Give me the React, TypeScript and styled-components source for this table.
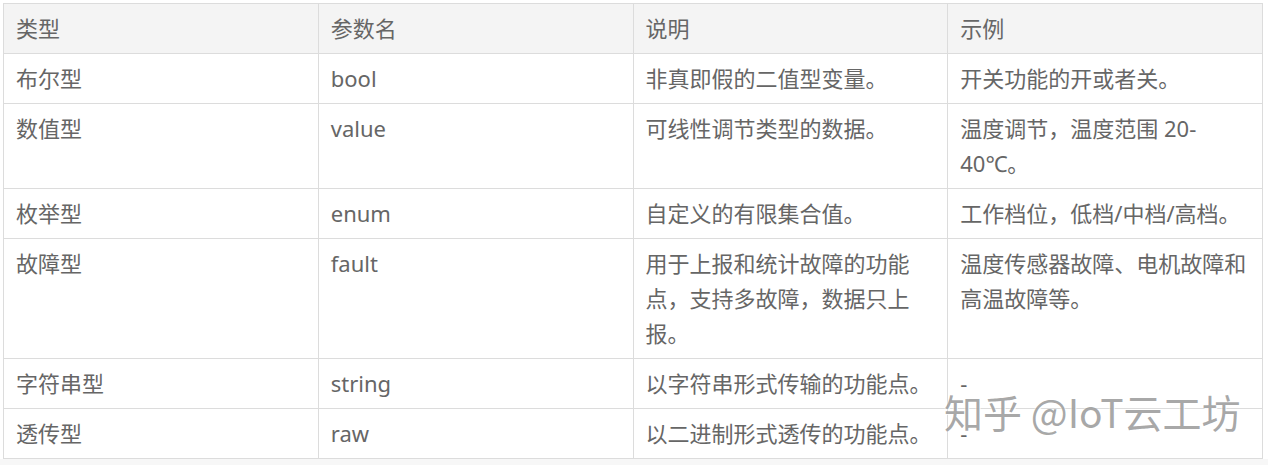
import React from 'react';
import styled, { createGlobalStyle } from 'styled-components';

const GlobalStyle = createGlobalStyle`
	html, body {
		margin: 0;
		padding: 0;
		background: #ffffff;
	}
	body {
		font-family: 'Noto Sans', 'Noto Sans CJK SC', sans-serif;
	}
`;

const Page = styled.div`
	position: relative;
	width: 1268px;
	height: 465px;
	box-sizing: border-box;
	padding: 3px 0 0 3px;
	background: linear-gradient(to bottom, #ffffff 0, #ffffff 459px, #f7f7f7 459px);
`;

const Table = styled.table`
	width: 1260px;
	table-layout: fixed;
	border-collapse: collapse;
	font-family: 'Noto Sans', 'Noto Sans CJK SC', sans-serif;
	font-size: 22px;
	line-height: 35px;
	color: #666666;
	background: #ffffff;
`;

const HeadCell = styled.th`
	padding: 7px 12px;
	border: 1px solid #dcdcdc;
	background: #f4f4f4;
	font-weight: normal;
	text-align: left;
	vertical-align: top;
`;

const Cell = styled.td`
	padding: 7px 12px;
	border: 1px solid #dcdcdc;
	text-align: left;
	vertical-align: top;
`;

const Watermark = styled.div`
	position: absolute;
	left: 944px;
	top: 385px;
	font-family: 'Noto Sans CJK SC', 'Noto Sans', sans-serif;
	font-size: 39px;
	line-height: 52px;
	color: rgba(110, 110, 110, 0.6);
	text-shadow: 1px 1px 0 rgba(255, 255, 255, 0.9), -1px 0 0 rgba(255, 255, 255, 0.5);
	white-space: nowrap;
	pointer-events: none;
`;

const headers = ['类型', '参数名', '说明', '示例'];

const rows: string[][] = [
	['布尔型', 'bool', '非真即假的二值型变量。', '开关功能的开或者关。'],
	['数值型', 'value', '可线性调节类型的数据。', '温度调节，温度范围 20-40℃。'],
	['枚举型', 'enum', '自定义的有限集合值。', '工作档位，低档/中档/高档。'],
	['故障型', 'fault', '用于上报和统计故障的功能点，支持多故障，数据只上报。', '温度传感器故障、电机故障和高温故障等。'],
	['字符串型', 'string', '以字符串形式传输的功能点。', '-'],
	['透传型', 'raw', '以二进制形式透传的功能点。', '-'],
];

export default function App() {
	return (
		<Page>
			<GlobalStyle />
			<Table>
				<thead>
					<tr>
						{headers.map((h) => (
							<HeadCell key={h}>{h}</HeadCell>
						))}
					</tr>
				</thead>
				<tbody>
					{rows.map((row) => (
						<tr key={row[1]}>
							{row.map((text, i) => (
								<Cell key={i}>{text}</Cell>
							))}
						</tr>
					))}
				</tbody>
			</Table>
			<Watermark>知乎 @IoT云工坊</Watermark>
		</Page>
	);
}
